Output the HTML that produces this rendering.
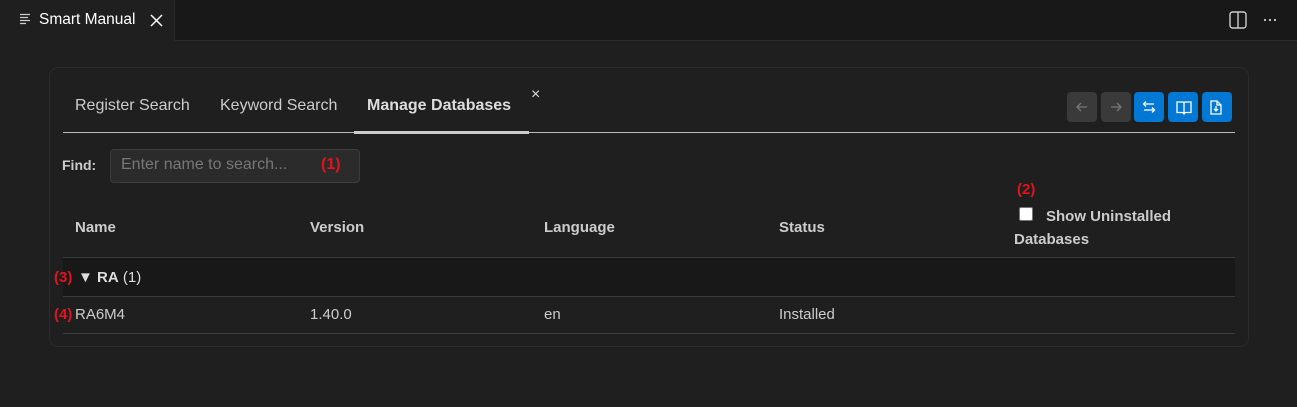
<!DOCTYPE html><html><head><style>
body{margin:0;width:1297px;height:407px;background:#1f1f1f;font-family:"Liberation Sans",sans-serif;color:#ccc;position:relative;overflow:hidden}
.a{position:absolute}
.b{font-weight:bold}
.red{color:#e0141e;font-weight:bold}
</style></head><body>
<div class="a" style="left:0;top:0;width:1297px;height:40px;background:#181818;border-bottom:1px solid #2b2b2b"></div>
<div class="a" style="left:0;top:0;width:174px;height:41px;background:#1f1f1f;border-right:1px solid #2b2b2b"></div>
<svg class="a" style="left:20px;top:13px" width="12" height="12"><path d="M0 1.5h10M0 4.5h8M0 7.5h10M0 10.5h6" stroke="#ccc" stroke-width="1.2"/></svg>
<div class="a" style="left:39px;top:11px;font-size:15.5px;color:#fff">Smart Manual</div>
<svg class="a" style="left:150px;top:14px" width="13" height="13"><path d="M1 1L12 12M12 1L1 12" stroke="#fff" stroke-width="1.5"/></svg>
<svg class="a" style="left:1229px;top:11px" width="18" height="18"><rect x="1" y="1" width="16" height="16" rx="2.5" fill="none" stroke="#ccc" stroke-width="1.4"/><path d="M9 1v16" stroke="#ccc" stroke-width="1.4"/></svg>
<svg class="a" style="left:1263px;top:18px" width="14" height="4"><circle cx="2" cy="2" r="1.1" fill="#ccc"/><circle cx="7" cy="2" r="1.1" fill="#ccc"/><circle cx="12" cy="2" r="1.1" fill="#ccc"/></svg>

<div class="a" style="left:49px;top:67px;width:1198px;height:278px;border:1px solid #2b2b2b;border-radius:9px"></div>
<div class="a" style="left:75px;top:97px;font-size:16px;color:#ccc">Register Search</div>
<div class="a" style="left:220px;top:97px;font-size:16px;color:#ccc">Keyword Search</div>
<div class="a b" style="left:367px;top:97px;font-size:16px;color:#ddd">Manage Databases</div>
<div class="a" style="left:531px;top:86px;font-size:16px;color:#ddd">×</div>
<div class="a" style="left:63px;top:132px;width:1172px;height:1px;background:#bbb"></div>
<div class="a" style="left:354px;top:131px;width:175px;height:3px;background:#ccc"></div>

<div class="a" style="left:1067px;top:92px;width:30px;height:30px;background:#3a3a3a;border-radius:4px"></div>
<div class="a" style="left:1101px;top:92px;width:30px;height:30px;background:#3a3a3a;border-radius:4px"></div>
<svg class="a" style="left:1067px;top:92px" width="64" height="30"><path d="M10 15h10M14 11l-4 4 4 4M44 15h10M50 11l4 4-4 4" stroke="#777" stroke-width="1.3" fill="none"/></svg>
<div class="a" style="left:1134px;top:92px;width:30px;height:30px;background:#0078d4;border-radius:4px"></div>
<div class="a" style="left:1168px;top:92px;width:30px;height:30px;background:#0078d4;border-radius:4px"></div>
<div class="a" style="left:1202px;top:92px;width:30px;height:30px;background:#0078d4;border-radius:4px"></div>
<svg class="a" style="left:1134px;top:92px" width="98" height="30"><g stroke="#fff" stroke-width="1.3" fill="none"><path d="M10 12h10M12 9.5l-2.5 2.5 2.5 2.5M10 18h10M18 15.5l2.5 2.5-2.5 2.5"/><path d="M43 10h5.5q1.5 0 1.5 1.5v10q-1-1-2-1h-5zM57 10h-5.5q-1.5 0-1.5 1.5v10q1-1 2-1h5z"/><path d="M77 9h6l4 4v9h-10zM83 9v4h4M82 14v5M80 17l2 2 2-2"/></g></svg>

<div class="a b" style="left:62px;top:157px;font-size:14px;color:#ccc">Find:</div>
<div class="a" style="left:110px;top:149px;width:248px;height:32px;background:#2b2b2b;border:1px solid #3c3c3c;border-radius:4px"></div>
<div class="a" style="left:121px;top:156px;font-size:16px;color:#777">Enter name to search...</div>
<div class="a red" style="left:321px;top:156px;font-size:16px">(1)</div>

<div class="a b" style="left:75px;top:219px;font-size:15px">Name</div>
<div class="a b" style="left:310px;top:219px;font-size:15px">Version</div>
<div class="a b" style="left:544px;top:219px;font-size:15px">Language</div>
<div class="a b" style="left:779px;top:219px;font-size:15px">Status</div>
<div class="a red" style="left:1017px;top:181px;font-size:15px">(2)</div>
<div class="a" style="left:1019px;top:207px;width:12px;height:12px;background:#fff;border:1px solid #777;border-radius:2px"></div>
<div class="a b" style="left:1046px;top:208px;font-size:15px">Show Uninstalled</div>
<div class="a b" style="left:1014px;top:231px;font-size:15px">Databases</div>

<div class="a" style="left:63px;top:257px;width:1172px;height:38px;background:#181818;border-top:1px solid #3c3c3c;border-bottom:1px solid #3c3c3c"></div>
<div class="a red" style="left:54px;top:269px;font-size:15px">(3)</div>
<div class="a" style="left:78px;top:269px;font-size:15px;color:#ddd"><b>▼ RA</b> (1)</div>
<div class="a red" style="left:54px;top:306px;font-size:15px">(4)</div>
<div class="a" style="left:75px;top:306px;font-size:15px">RA6M4</div>
<div class="a" style="left:310px;top:306px;font-size:15px">1.40.0</div>
<div class="a" style="left:544px;top:306px;font-size:15px">en</div>
<div class="a" style="left:779px;top:306px;font-size:15px">Installed</div>
<div class="a" style="left:63px;top:333px;width:1172px;height:1px;background:#3c3c3c"></div>
</body></html>
